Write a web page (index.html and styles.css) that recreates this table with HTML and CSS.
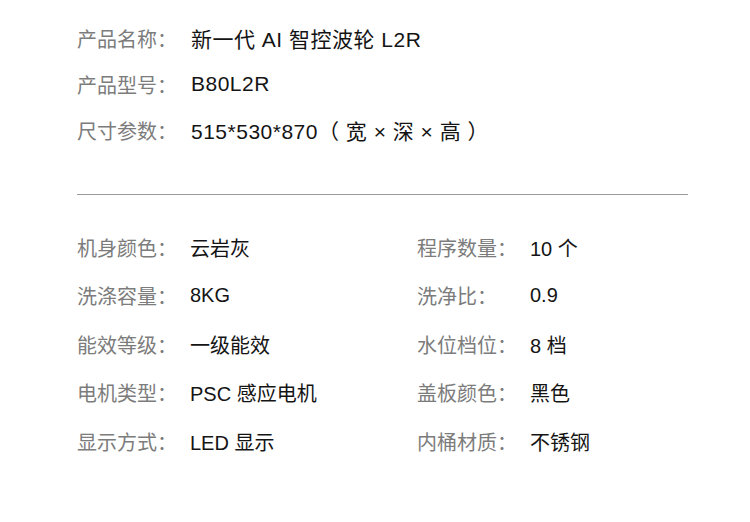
FILE: index.html
```html
<!DOCTYPE html>
<html lang="zh">
<head>
<meta charset="utf-8">
<link rel="stylesheet" href="styles.css">
</head>
<body>
<div class="page">
  <div class="specs-top">
    <div class="label">产品名称：</div><div class="value value-wide">新一代 AI 智控波轮 L2R</div>
    <div class="label">产品型号：</div><div class="value value-wide">B80L2R</div>
    <div class="label">尺寸参数：</div><div class="value value-wide">515*530*870（ 宽 × 深 × 高 ）</div>
  </div>
  <div class="divider"></div>
  <div class="specs-grid">
    <div class="label">机身颜色：</div><div class="value">云岩灰</div>
    <div class="label">程序数量：</div><div class="value">10 个</div>
    <div class="label">洗涤容量：</div><div class="value">8KG</div>
    <div class="label">洗净比：</div><div class="value">0.9</div>
    <div class="label">能效等级：</div><div class="value">一级能效</div>
    <div class="label">水位档位：</div><div class="value">8 档</div>
    <div class="label">电机类型：</div><div class="value">PSC 感应电机</div>
    <div class="label">盖板颜色：</div><div class="value">黑色</div>
    <div class="label">显示方式：</div><div class="value">LED 显示</div>
    <div class="label">内桶材质：</div><div class="value">不锈钢</div>
  </div>
</div>
</body>
</html>
```

FILE: styles.css
```css
html, body {
  margin: 0;
  padding: 0;
  background: #ffffff;
}
.page {
  width: 611px;
  padding: 15px 0 0 77px;
  font-family: "Liberation Sans", "Noto Sans CJK SC", sans-serif;
  font-size: 20px;
}
.specs-top {
  display: grid;
  grid-template-columns: 113px 1fr;
  grid-auto-rows: 46px;
  align-items: center;
}
.specs-grid {
  display: grid;
  grid-template-columns: 113px 227px 113px 1fr;
  grid-auto-rows: 48.5px;
  align-items: center;
  margin-top: 28px;
}
.label {
  color: #7c7c7c;
  white-space: nowrap;
}
.value {
  color: #141414;
  white-space: nowrap;
}
.value-wide {
  padding-left: 1px;
  font-size: 21px;
  letter-spacing: 0.5px;
}
.divider {
  margin-top: 41px;
  height: 1px;
  background: #9a9a9a;
}
```
